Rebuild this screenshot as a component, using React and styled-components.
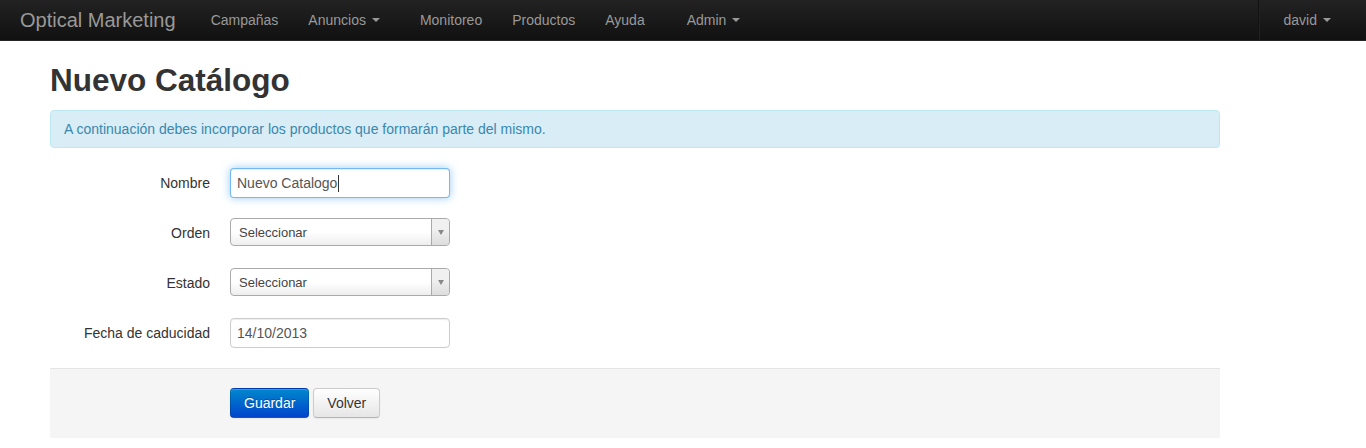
import React from "react";
import styled, { createGlobalStyle } from "styled-components";

const Global = createGlobalStyle`
  html, body { margin: 0; padding: 0; background: #fff; }
  body {
    font-family: "Liberation Sans", Arial, Helvetica, sans-serif;
    font-size: 14px;
    line-height: 20px;
    color: #333;
  }
  * { box-sizing: border-box; }
`;

const Navbar = styled.nav`
  height: 41px;
  background: linear-gradient(to bottom, #222222, #111111);
  border-bottom: 1px solid #252525;
  display: flex;
  align-items: stretch;
  padding: 0 20px;
`;

const Brand = styled.a`
  display: block;
  padding: 10px 20px 10px 0;
  font-size: 20px;
  line-height: 20px;
  color: #999;
  text-decoration: none;
`;

const NavList = styled.ul`
  display: flex;
  list-style: none;
  margin: 0;
  padding: 0;
`;

const RightNav = styled(NavList)`
  margin-left: auto;
`;

const NavItem = styled.li`
  margin-right: ${(p) => p.$extra || 0}px;
`;

const NavLink = styled.a`
  display: block;
  padding: 10px 15px;
  line-height: 20px;
  color: #999;
  text-decoration: none;
  white-space: nowrap;
`;

const Caret = styled.b`
  display: inline-block;
  width: 0;
  height: 0;
  vertical-align: top;
  margin-top: 8px;
  margin-left: 6px;
  border-top: 4px solid #999;
  border-left: 4px solid transparent;
  border-right: 4px solid transparent;
`;

const Divider = styled.li`
  width: 2px;
  height: 40px;
  margin: 0 9px;
  border-left: 1px solid #111;
  border-right: 1px solid #222;
`;

const Main = styled.main`
  width: 1220px;
  padding-left: 50px;
  padding-top: 19px;
`;

const Title = styled.h2`
  margin: 0 0 10px;
  font-size: 31.5px;
  line-height: 40px;
  font-weight: bold;
  color: #333;
`;

const Alert = styled.div`
  padding: 8px 35px 8px 13px;
  margin-bottom: 20px;
  background: #d9edf7;
  border: 1px solid #bce8f1;
  border-radius: 4px;
  color: #3a87ad;
`;

const Form = styled.form`
  margin: 0;
`;

const Row = styled.div`
  display: flex;
  align-items: flex-start;
  margin-bottom: 20px;
  height: 30px;
`;

const Label = styled.label`
  width: 160px;
  padding-top: 5px;
  text-align: right;
  color: #333;
`;

const Controls = styled.div`
  margin-left: 20px;
  position: relative;
`;

const TextInput = styled.input`
  display: block;
  width: 220px;
  height: 30px;
  padding: 4px 6px;
  font-family: inherit;
  font-size: 14px;
  line-height: 20px;
  color: #555;
  background: #fff;
  border: 1px solid ${(p) => (p.$focus ? "rgba(82,168,236,0.8)" : "#ccc")};
  border-radius: 4px;
  outline: none;
  box-shadow: inset 0 1px 1px rgba(0, 0, 0, 0.075)
    ${(p) => (p.$focus ? ", 0 0 8px rgba(82,168,236,0.6)" : "")};
`;

const TextCaret = styled.span`
  position: absolute;
  left: 108px;
  top: 7px;
  width: 1px;
  height: 17px;
  background: #333;
`;

const Select = styled.div`
  position: relative;
  width: 220px;
  height: 28px;
  padding-left: 8px;
  border: 1px solid #aaa;
  border-radius: 4px;
  background: linear-gradient(to top, #eeeeee 0%, #ffffff 50%);
  font-size: 13px;
  line-height: 26px;
  color: #444;
  display: flex;
  align-items: center;
`;

const SelectText = styled.span`
  flex: 1;
  padding-top: 1px;
`;

const SelectArrow = styled.span`
  width: 18px;
  height: 100%;
  border-left: 1px solid #aaa;
  border-radius: 0 4px 4px 0;
  background: linear-gradient(to top, #dddddd 0%, #f0f0f0 60%);
  display: flex;
  align-items: center;
  justify-content: center;
  &::after {
    content: "";
    width: 0;
    height: 0;
    border-top: 5px solid #888;
    border-left: 3px solid transparent;
    border-right: 3px solid transparent;
  }
`;

const Actions = styled.div`
  margin-top: 20px;
  padding: 19px 20px 20px 180px;
  background: #f5f5f5;
  border-top: 1px solid #e5e5e5;
  display: flex;
  gap: 4px;
`;

const Button = styled.button`
  font-family: inherit;
  font-size: 14px;
  line-height: 20px;
  padding: 4px 13px;
  height: 30px;
  border-radius: 4px;
  cursor: pointer;
  border: 1px solid ${(p) => (p.$primary ? "rgba(0,0,0,0.15)" : "#cccccc")};
  border-bottom-color: ${(p) => (p.$primary ? "rgba(0,0,0,0.25)" : "#b3b3b3")};
  color: ${(p) => (p.$primary ? "#fff" : "#333")};
  text-shadow: ${(p) =>
    p.$primary ? "0 -1px 0 rgba(0,0,0,0.25)" : "0 1px 1px rgba(255,255,255,0.75)"};
  background: ${(p) =>
    p.$primary
      ? "linear-gradient(to bottom, #0088cc, #0044cc)"
      : "linear-gradient(to bottom, #ffffff, #e6e6e6)"};
  box-shadow: inset 0 1px 0 rgba(255, 255, 255, 0.2), 0 1px 2px rgba(0, 0, 0, 0.05);
`;

const Field = ({ label, children }) => (
  <Row>
    <Label>{label}</Label>
    <Controls>{children}</Controls>
  </Row>
);

const SelectBox = ({ text }) => (
  <Select>
    <SelectText>{text}</SelectText>
    <SelectArrow />
  </Select>
);

export default function App() {
  return (
    <>
      <Global />
      <Navbar>
        <Brand href="#">Optical Marketing</Brand>
        <NavList>
          <NavItem><NavLink href="#">Campañas</NavLink></NavItem>
          <NavItem $extra={10}><NavLink href="#">Anuncios<Caret /></NavLink></NavItem>
          <NavItem><NavLink href="#">Monitoreo</NavLink></NavItem>
          <NavItem><NavLink href="#">Productos</NavLink></NavItem>
          <NavItem $extra={12}><NavLink href="#">Ayuda</NavLink></NavItem>
          <NavItem><NavLink href="#">Admin<Caret /></NavLink></NavItem>
        </NavList>
        <RightNav>
          <Divider />
          <NavItem><NavLink href="#">david<Caret /></NavLink></NavItem>
        </RightNav>
      </Navbar>
      <Main>
        <Title>Nuevo Catálogo</Title>
        <Alert>A continuación debes incorporar los productos que formarán parte del mismo.</Alert>
        <Form>
          <Field label="Nombre">
            <TextInput $focus defaultValue="Nuevo Catalogo" readOnly />
            <TextCaret />
          </Field>
          <Field label="Orden">
            <SelectBox text="Seleccionar" />
          </Field>
          <Field label="Estado">
            <SelectBox text="Seleccionar" />
          </Field>
          <Field label="Fecha de caducidad">
            <TextInput defaultValue="14/10/2013" readOnly />
          </Field>
          <Actions>
            <Button $primary type="button">Guardar</Button>
            <Button type="button">Volver</Button>
          </Actions>
        </Form>
      </Main>
    </>
  );
}
